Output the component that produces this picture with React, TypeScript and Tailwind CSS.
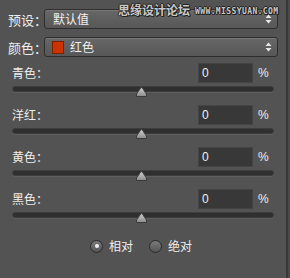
import React from "react";

const font = { fontFamily: '"Noto Sans CJK SC", "Liberation Sans", sans-serif' };

function UpDown() {
  return (
    <svg width="7" height="10" viewBox="0 0 7 10" className="shrink-0">
      <path d="M3.5 0.5 L6.5 4 L0.5 4 Z" fill="#e6e6e6" />
      <path d="M0.5 6 L6.5 6 L3.5 9.5 Z" fill="#e6e6e6" />
    </svg>
  );
}

function Select({ children }: { children: React.ReactNode }) {
  return (
    <div className="shrink-0 w-[234px] h-[20px] rounded-[3px] border border-[#2e2e2e] bg-gradient-to-b from-[#676767] to-[#575757] shadow-[inset_0_1px_0_#767676] flex items-center pl-[8px] pr-[5px]">
      <div className="flex-1 flex items-center text-[12px] text-[#f0f0f0] leading-none whitespace-nowrap">{children}</div>
      <UpDown />
    </div>
  );
}

function Thumb() {
  return (
    <svg width="11" height="10" viewBox="0 0 11 10" className="absolute left-[124px] top-[1px]">
      <defs>
        <linearGradient id="tg" x1="0" y1="0" x2="0" y2="1">
          <stop offset="0" stopColor="#d0d0d0" />
          <stop offset="1" stopColor="#8a8a8a" />
        </linearGradient>
      </defs>
      <path d="M0.5 9.5 L0.5 7 L4.5 1.2 Q5.5 0 6.5 1.2 L10.5 7 L10.5 9.5 Z" fill="url(#tg)" stroke="#3a3a3a" strokeWidth="1" />
    </svg>
  );
}

function Channel({ label, first }: { label: string; first?: boolean }) {
  return (
    <div className={first ? "mt-[6px]" : "mt-[13px]"}>
      <div className="h-[20px] flex items-center">
        <div className="shrink-0 w-[190px] pl-[4px] text-[12px] text-[#eeeeee] leading-none whitespace-nowrap">{label}：</div>
        <div className="shrink-0 w-[55px] h-[20px] bg-[#383838] border border-[#444444] flex items-center pl-[3px] text-[12px] text-[#f0f0f0]" style={{ fontFamily: '"Liberation Sans", sans-serif' }}>
          0
        </div>
        <div className="ml-[5px] text-[12px] text-[#eeeeee]" style={{ fontFamily: '"Liberation Sans", sans-serif' }}>%</div>
      </div>
      <div className="relative mt-[3px] ml-[4px] w-[262px] h-[6px]">
        <div className="w-full h-[6px] rounded-[3px] bg-[#2f2f2f] border border-[#3d3d3d] shadow-[0_1px_0_#5e5e5e]" />
        <Thumb />
      </div>
    </div>
  );
}

function Radio({ checked, label }: { checked?: boolean; label: string }) {
  return (
    <div className="flex items-center">
      <div className="w-[13px] h-[13px] rounded-full border border-[#2a2a2a] bg-gradient-to-b from-[#7a7a7a] to-[#555555] flex items-center justify-center">
        {checked && <div className="w-[4px] h-[4px] rounded-full bg-[#f2f2f2]" />}
      </div>
      <span className="ml-[6px] text-[12px] text-[#eeeeee] leading-none whitespace-nowrap">{label}</span>
    </div>
  );
}

const outline = { textShadow: "1px 0 #222, -1px 0 #222, 0 1px #222, 0 -1px #222, 1px 1px #222" };

export default function App() {
  return (
    <div className="relative w-[290px] h-[278px] bg-[#535353] overflow-hidden flex" style={font}>
      <div className="w-[286px] shrink-0 h-full pl-[8px]">
        <div className="mt-[9px] h-[20px] flex items-center">
          <div className="shrink-0 w-[36px] text-[13px] text-[#eeeeee] leading-none whitespace-nowrap">预设：</div>
          <Select>默认值</Select>
        </div>
        <div className="mt-[8px] h-[20px] flex items-center">
          <div className="shrink-0 w-[36px] text-[13px] text-[#eeeeee] leading-none whitespace-nowrap">颜色：</div>
          <Select>
            <span className="w-[12px] h-[13px] bg-[#cc3300] border border-[#7a2000] mr-[6px] -ml-[1px]" />
            红色
          </Select>
        </div>
        <Channel label="青色" first />
        <Channel label="洋红" />
        <Channel label="黄色" />
        <Channel label="黑色" />
        <div className="mt-[21px] h-[14px] flex items-center pl-[82px] gap-[16px]">
          <Radio checked label="相对" />
          <Radio label="绝对" />
        </div>
      </div>
      <div className="w-[2px] shrink-0 h-full bg-[#383838]" />
      <div className="w-[2px] shrink-0 h-full bg-[#4a4a4a]" />
      <span
        className="absolute left-[118px] top-[4px] text-[12px] leading-none text-[#c8c8c8] font-bold whitespace-nowrap"
        style={outline}
      >
        思缘设计论坛
      </span>
      <span
        className="absolute left-[195px] top-[8px] text-[8px] leading-none text-[#c8c8c8] font-bold whitespace-nowrap tracking-[0.4px]"
        style={{ fontFamily: '"DejaVu Sans Mono", monospace', ...outline }}
      >
        WWW.MISSYUAN.COM
      </span>
    </div>
  );
}
